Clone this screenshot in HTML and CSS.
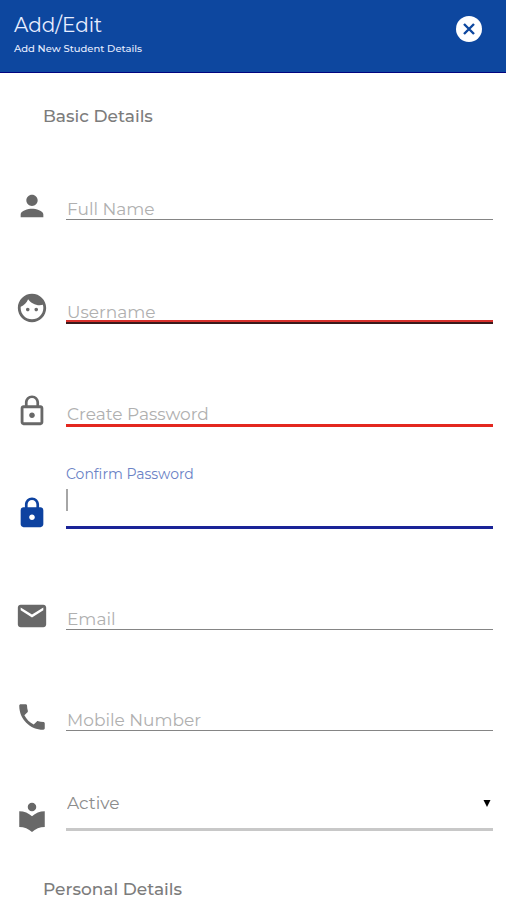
FILE: index.html
```html
<!DOCTYPE html>
<html lang="en">
<head>
<meta charset="utf-8">
<meta name="viewport" content="width=device-width, initial-scale=1">
<title>Add/Edit Student</title>
<link rel="stylesheet" href="styles.css">
</head>
<body>
<header class="topbar">
  <div>
    <h1 class="title">Add/Edit</h1>
    <p class="subtitle">Add New Student Details</p>
  </div>
  <button class="close" type="button" aria-label="Close">
    <svg viewBox="0 0 26 26"><circle cx="13" cy="13" r="13" fill="#fff"/><path d="M8 8l10 10M18 8L8 18" stroke="#0d479f" stroke-width="2.4" fill="none"/></svg>
  </button>
</header>
<main>
  <form>
    <h2 class="section">Basic Details</h2>
    <div class="fields">
      <div class="row">
        <svg class="icon" viewBox="0 0 24 24"><path d="M12 12c2.21 0 4-1.79 4-4s-1.79-4-4-4-4 1.79-4 4 1.79 4 4 4zm0 2c-2.67 0-8 1.34-8 4v2h16v-2c0-2.66-5.33-4-8-4z"/></svg>
        <div class="field"><input type="text" aria-label="Full Name" placeholder="Full Name"></div>
      </div>
      <div class="row row-marked">
        <svg class="icon" viewBox="0 0 24 24"><path d="M9 11.75c-.69 0-1.25.56-1.25 1.25s.56 1.25 1.25 1.25 1.25-.56 1.25-1.25-.56-1.25-1.25-1.25zm6 0c-.69 0-1.25.56-1.25 1.25s.56 1.25 1.25 1.25 1.25-.56 1.25-1.25-.56-1.25-1.25-1.25zM12 2C6.48 2 2 6.48 2 12s4.48 10 10 10 10-4.480 10-10S17.520 2 12 2zm0 18c-4.410 0-8-3.590-8-8 0-.29.020-.58.050-.86 2.360-1.050 4.230-2.980 5.210-5.370C11.070 8.330 14.050 10 17.420 10c.78 0 1.530-.09 2.250-.26.210.71.330 1.470.330 2.260 0 4.410-3.590 8-8 8z"/></svg>
        <div class="field field-username"><input type="text" aria-label="Username" placeholder="Username"></div>
      </div>
      <div class="row row-marked">
        <svg class="icon" viewBox="0 0 24 24"><path d="M12 17c1.100 0 2-.9 2-2s-.9-2-2-2-2 .9-2 2 .9 2 2 2zm6-9h-1V6c0-2.760-2.240-5-5-5S7 3.240 7 6v2H6c-1.100 0-2 .9-2 2v10c0 1.100.9 2 2 2h12c1.100 0 2-.9 2-2V10c0-1.100-.9-2-2-2zM8.900 6c0-1.710 1.390-3.100 3.100-3.100s3.100 1.390 3.100 3.100v2H8.900V6zM18 20H6V10h12v10z"/></svg>
        <div class="field field-error"><input type="password" aria-label="Create Password" placeholder="Create Password"></div>
      </div>
      <div class="row row-marked">
        <svg class="icon icon-active" viewBox="0 0 24 24"><path d="M18 8h-1V6c0-2.760-2.240-5-5-5S7 3.240 7 6v2H6c-1.100 0-2 .9-2 2v10c0 1.100.9 2 2 2h12c1.100 0 2-.9 2-2V10c0-1.100-.9-2-2-2zm-6 9c-1.100 0-2-.9-2-2s.9-2 2-2 2 .9 2 2-.9 2-2 2zm3.100-9H8.900V6c0-1.710 1.390-3.100 3.100-3.100s3.100 1.390 3.100 3.100v2z"/></svg>
        <div class="field field-active">
          <label for="confirm">Confirm Password</label>
          <div class="entry"><input id="confirm" type="password"></div>
        </div>
      </div>
      <div class="row">
        <svg class="icon" viewBox="0 0 24 24"><path d="M20 4H4c-1.100 0-1.990.9-1.990 2L2 18c0 1.100.9 2 2 2h16c1.100 0 2-.9 2-2V6c0-1.100-.9-2-2-2zm0 4l-8 5-8-5V6l8 5 8-5v2z"/></svg>
        <div class="field"><input type="email" aria-label="Email" placeholder="Email"></div>
      </div>
      <div class="row">
        <svg class="icon" viewBox="0 0 24 24"><path d="M6.620 10.790c1.440 2.830 3.760 5.140 6.590 6.590l2.200-2.200c.27-.27.67-.36 1.020-.24 1.120.37 2.330.57 3.570.57.55 0 1 .45 1 1V20c0 .55-.45 1-1 1-9.390 0-17-7.610-17-17 0-.55.45-1 1-1h3.500c.55 0 1 .45 1 1 0 1.250.2 2.450.57 3.570.11.35.030.74-.25 1.020l-2.200 2.200z"/></svg>
        <div class="field"><input type="tel" aria-label="Mobile Number" placeholder="Mobile Number"></div>
      </div>
      <div class="row">
        <svg class="icon" viewBox="0 0 24 24"><path d="M12 11.550C9.640 9.350 6.480 8 3 8v11c3.480 0 6.640 1.350 9 3.550 2.360-2.190 5.520-3.550 9-3.550V8c-3.480 0-6.640 1.350-9 3.550zM12 8c1.660 0 3-1.340 3-3s-1.340-3-3-3-3 1.340-3 3 1.340 3 3 3z"/></svg>
        <div class="field field-select">
          <select aria-label="Status"><option>Active</option><option>Inactive</option></select>
          <svg class="arrow" viewBox="0 0 8 8"><path d="M0 0h8L4 8z"/></svg>
        </div>
      </div>
    </div>
    <h2 class="section">Personal Details</h2>
  </form>
</main>
</body>
</html>
```

FILE: styles.css
```css
* {
  box-sizing: border-box;
}

body {
  margin: 0;
  background: #fff;
  color: #7c7c7c;
  font-family: Montserrat, Inter, "Liberation Sans", sans-serif;
}

.topbar {
  display: flex;
  justify-content: space-between;
  align-items: flex-start;
  padding: 12px 24px 15px 14px;
  background: #0d479f;
  border-bottom: 1px solid #02047f;
  color: #e8eeff;
}

.title {
  margin: 0;
  font-size: 20px;
  line-height: 26px;
  font-weight: 400;
}

.subtitle {
  margin: 3px 0 0;
  font-size: 10px;
  line-height: 16px;
  font-weight: 500;
}

.close {
  width: 26px;
  height: 26px;
  margin-top: 4px;
  padding: 0;
  border: 0;
  background: none;
}

.close svg {
  display: block;
}

.section {
  margin: 32px 43px 30px;
  font-size: 17px;
  line-height: 22px;
  font-weight: 500;
}

.section:last-child {
  margin: 47px 43px 0;
}

.fields {
  display: grid;
  gap: 38px;
  padding: 0 13px 0 15px;
}

.row {
  display: flex;
  align-items: flex-end;
  gap: 17px;
}

.icon {
  flex: none;
  width: 34px;
  height: 34px;
  margin-bottom: -3px;
  fill: #686868;
}

.row-marked .icon {
  margin-bottom: -1px;
}

.icon-active {
  fill: #0d42a0;
}

.field {
  flex: 1;
  display: flex;
  flex-direction: column;
  justify-content: flex-end;
  min-height: 63px;
  border-bottom: 1px solid #858585;
}

.field-username {
  min-height: 66px;
  border-bottom: 2px solid #3a1a1c;
}

.field-username::after {
  content: "";
  height: 2px;
  margin-top: -2px;
  background: #d8302c;
}

.field-error {
  min-height: 65px;
  border-bottom: 3px solid #e3271f;
}

.field-active {
  min-height: 64px;
  border-bottom: 3px solid #1a2397;
}

.field-select {
  position: relative;
  min-height: 62px;
  padding-bottom: 15px;
  border-bottom: 3px solid #c8c8c8;
}

input,
select {
  display: block;
  width: 100%;
  height: 20px;
  padding: 0 0 0 1px;
  border: 0;
  outline: 0;
  background: none;
  color: #8c8c8c;
  font: 400 17px/20px Montserrat, Inter, "Liberation Sans", sans-serif;
}

input::placeholder {
  color: #b0b0b0;
  opacity: 1;
}

select {
  appearance: none;
}

.arrow {
  position: absolute;
  right: 2px;
  bottom: 21px;
  width: 8px;
  height: 7px;
  fill: #000;
}

label {
  color: #6a82c6;
  font-size: 14px;
  line-height: 18px;
}

.entry {
  display: flex;
  align-items: center;
  margin: 6px 0 15px;
}

.entry::before {
  content: "";
  width: 2px;
  height: 22px;
  background: #a6a6a6;
}
```
